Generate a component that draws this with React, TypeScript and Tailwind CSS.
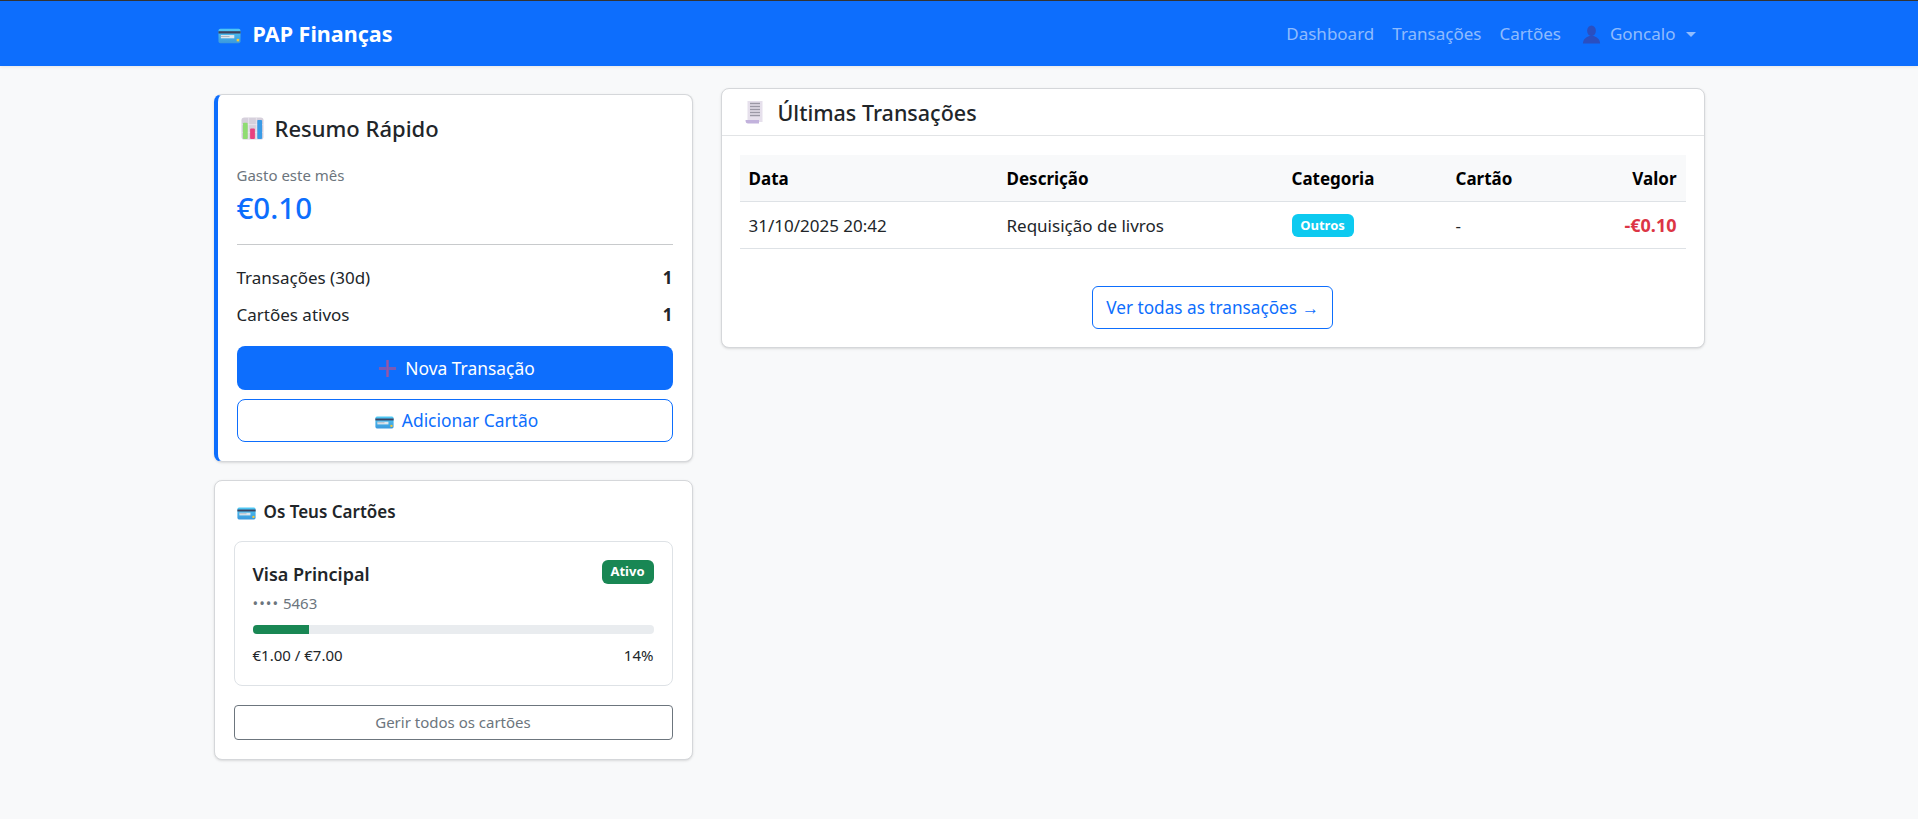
import React from 'react';

function CardIcon({ className }: { className?: string }) {
  return (
    <svg viewBox="0 0 24 16" className={className}>
      <defs>
        <linearGradient id="cardFill" x1="0" y1="0" x2="0" y2="1">
          <stop offset="0" stopColor="#4fc9f5" />
          <stop offset="1" stopColor="#3b98dc" />
        </linearGradient>
      </defs>
      <rect x="0.5" y="0.5" width="23" height="15" rx="2" fill="url(#cardFill)" />
      <rect x="0.5" y="3" width="23" height="2.4" fill="#3d4360" />
      <rect x="3" y="7" width="14" height="3.4" fill="#dfe7ee" />
      <rect x="3" y="8" width="9" height="0.8" fill="#9aa7b5" />
      <rect x="19.5" y="11" width="2.6" height="2.6" fill="#f5c93a" />
    </svg>
  );
}

function ChartIcon() {
  return (
    <svg viewBox="0 0 24 24" className="w-[23px] h-[23px] shrink-0 ml-[4px]">
      <rect x="0.5" y="0.5" width="23" height="23" rx="3" fill="#d6d0dc" />
      <path d="M8 0.5V23.5M16 0.5V23.5M0.5 8H23.5M0.5 16H23.5" stroke="#efecf2" strokeWidth="0.8" />
      <rect x="2" y="6" width="5" height="17" rx="1" fill="#8fdc72" />
      <rect x="9.5" y="12" width="5" height="11" rx="1" fill="#e8407f" />
      <rect x="17" y="3" width="5" height="20" rx="1" fill="#3a9be6" />
    </svg>
  );
}

function ReceiptIcon() {
  return (
    <svg viewBox="0 0 20 24" className="w-5 h-6 shrink-0">
      <rect x="2.5" y="1" width="15" height="21" fill="#e6e0ec" />
      <path d="M5 3.5H15M5 6.5H15M5 9.5H15M5 12.5H15M5 15.5H15" stroke="#9b98a5" strokeWidth="1.3" />
      <path d="M0.5 20H14V23.5H3Q0.5 23.5 0.5 20Z" fill="#c2b2dc" />
    </svg>
  );
}

function PlusIcon() {
  return (
    <svg viewBox="0 0 20 20" className="w-[19px] h-[19px] shrink-0">
      <path d="M8.5 1H11.5V8.5H19V11.5H11.5V19H8.5V11.5H1V8.5H8.5Z" fill="#7a5bb5" />
      <path d="M10 1V19" stroke="#9a55a8" strokeWidth="1" />
    </svg>
  );
}

function UserIcon() {
  return (
    <svg viewBox="0 0 20 20" className="w-[19px] h-[19px] shrink-0">
      <ellipse cx="10" cy="6" rx="4.6" ry="5.5" fill="#2a4fc0" />
      <path d="M1 19.5C1 14.5 5 12.5 7.5 11.5H12.5C15 12.5 19 14.5 19 19.5Z" fill="#2a4fc0" />
    </svg>
  );
}

const navLinks = ['Dashboard', 'Transações', 'Cartões'];

export default function App() {
  return (
    <div className="min-h-[819px] bg-[#f8f9fa] text-[#212529] font-['Noto_Sans',sans-serif] text-[17px]">
      <nav className="h-[66px] bg-[#0d6efd] border-t border-[#333] shadow-[0_1px_3px_rgba(0,0,0,0.08)]">
        <div className="w-[1491px] mx-auto h-full flex items-center justify-between pl-[4px] pr-[9px] pt-[1px]">
          <div className="flex items-center gap-[12px] text-white text-[21.5px] font-bold">
            <CardIcon className="w-[23px] h-[16px] mt-[3px]" />
            <span>PAP Finanças</span>
          </div>
          <div className="flex items-center gap-[18px] text-[rgba(255,255,255,0.55)] text-[17px]">
            {navLinks.map((l) => (
              <a key={l}>{l}</a>
            ))}
            <a className="flex items-center gap-[9px] ml-[3px]">
              <UserIcon />
              Goncalo
              <span className="ml-[1px] w-0 h-0 border-x-[5px] border-x-transparent border-t-[5px] border-t-[rgba(255,255,255,0.55)]" />
            </a>
          </div>
        </div>
      </nav>

      <main className="w-[1491px] mx-auto grid grid-cols-[479px_984px] gap-[28px] pt-[22px]">
        <div className="flex flex-col gap-[18px] pt-[6px]">
          <section className="bg-white rounded-lg border border-[#d5d7da] border-l-4 border-l-[#0d6efd] shadow-sm pl-[19px] pr-[19px] pt-[17px] pb-[19px]">
            <div className="flex items-center gap-[11px]">
              <ChartIcon />
              <h2 className="text-[22px] font-medium leading-[32px]">Resumo Rápido</h2>
            </div>
            <p className="mt-[21px] text-[15px] text-[#6c757d] leading-[20px]">Gasto este mês</p>
            <p className="pt-[1px] text-[29.5px] font-medium text-[#0d6efd] leading-[43px]">€0.10</p>
            <hr className="mt-[15px] border-[#c8cacc]" />
            <div className="mt-[21px] flex justify-between leading-[24px]">
              <span>Transações (30d)</span>
              <b>1</b>
            </div>
            <div className="mt-[13px] flex justify-between leading-[24px]">
              <span>Cartões ativos</span>
              <b>1</b>
            </div>
            <button className="mt-[19px] w-full h-[44px] pl-[4px] flex items-center justify-center gap-[8px] bg-[#0d6efd] text-white text-[17.4px] rounded-lg">
              <PlusIcon />
              Nova Transação
            </button>
            <button className="mt-[9px] w-full h-[43px] pl-[4px] flex items-center justify-center gap-[8px] bg-white border border-[#0d6efd] text-[#0d6efd] text-[17.4px] rounded-lg">
              <CardIcon className="w-[19px] h-[13px] mt-[3px]" />
              Adicionar Cartão
            </button>
          </section>

          <section className="bg-white rounded-lg border border-[#d5d7da] shadow-sm px-[19px] pt-[19px] pb-[19px]">
            <div className="flex items-center gap-[8px] pl-[3px] leading-[24px]">
              <CardIcon className="w-[19px] h-[13px] mt-[3px]" />
              <h3 className="text-[17px] font-semibold">Os Teus Cartões</h3>
            </div>
            <div className="mt-[17px] border border-[#dee2e6] rounded-lg px-[18px] pt-[18px] pb-[20px]">
              <div className="flex justify-between items-start">
                <span className="text-[18px] font-semibold leading-[24px] mt-[2px]">Visa Principal</span>
                <span className="bg-[#198754] text-white text-[13px] font-bold rounded-md w-[52px] justify-center h-[24px] flex items-center">Ativo</span>
              </div>
              <p className="text-[15px] text-[#6c757d] leading-[20px] mt-[7px]">
                <span className="tracking-[1px]">••••</span> 5463
              </p>
              <div className="mt-[12px] h-[9px] rounded bg-[#e9ecef] overflow-hidden">
                <div className="h-full w-[14%] bg-[#198754]" />
              </div>
              <div className="mt-[11px] flex justify-between text-[15px] leading-[20px]">
                <span>€1.00 / €7.00</span>
                <span>14%</span>
              </div>
            </div>
            <button className="mt-[19px] w-full h-[35px] border border-[#6c757d] rounded text-[15px] text-[#6c757d]">
              Gerir todos os cartões
            </button>
          </section>
        </div>

        <section className="self-start bg-white rounded-lg border border-[#d5d7da] shadow-sm">
          <div className="h-[47px] border-b border-[#e2e4e6] flex items-center gap-[13px] pl-[23px]">
            <ReceiptIcon />
            <h2 className="text-[21.5px] font-medium pt-[2px]">Últimas Transações</h2>
          </div>
          <div className="px-[18px] pt-[19px] pb-[18px]">
            <table className="w-full table-fixed border-collapse">
              <colgroup>
                <col className="w-[258px]" />
                <col className="w-[285px]" />
                <col className="w-[164px]" />
                <col className="w-[100px]" />
                <col />
              </colgroup>
              <thead>
                <tr className="h-[46px] bg-[#f8f9fa] border-b border-[#dee2e6] text-black text-left">
                  <th className="px-[9px] pt-[2px] font-bold">Data</th>
                  <th className="px-[9px] pt-[2px] font-bold">Descrição</th>
                  <th className="px-[9px] pt-[2px] font-bold">Categoria</th>
                  <th className="px-[9px] pt-[2px] font-bold">Cartão</th>
                  <th className="px-[9px] pt-[2px] font-bold text-right">Valor</th>
                </tr>
              </thead>
              <tbody>
                <tr className="h-[47px] border-b border-[#dee2e6]">
                  <td className="px-[9px] pt-[2px]">31/10/2025 20:42</td>
                  <td className="px-[9px] pt-[2px]">Requisição de livros</td>
                  <td className="px-[9px]">
                    <span className="inline-flex items-center justify-center w-[62px] h-[23px] rounded-md bg-[#0dcaf0] text-white text-[13px] font-bold align-middle">Outros</span>
                  </td>
                  <td className="px-[9px] pt-[2px]">-</td>
                  <td className="px-[9px] pt-[2px] text-right font-bold text-[18px] text-[#dc3545]">-€0.10</td>
                </tr>
              </tbody>
            </table>
            <div className="mt-[37px] flex justify-center">
              <button className="w-[241px] h-[43px] pt-[1px] border border-[#0d6efd] rounded-md text-[#0d6efd] text-[17.2px]">
                Ver todas as transações →
              </button>
            </div>
          </div>
        </section>
      </main>
    </div>
  );
}
